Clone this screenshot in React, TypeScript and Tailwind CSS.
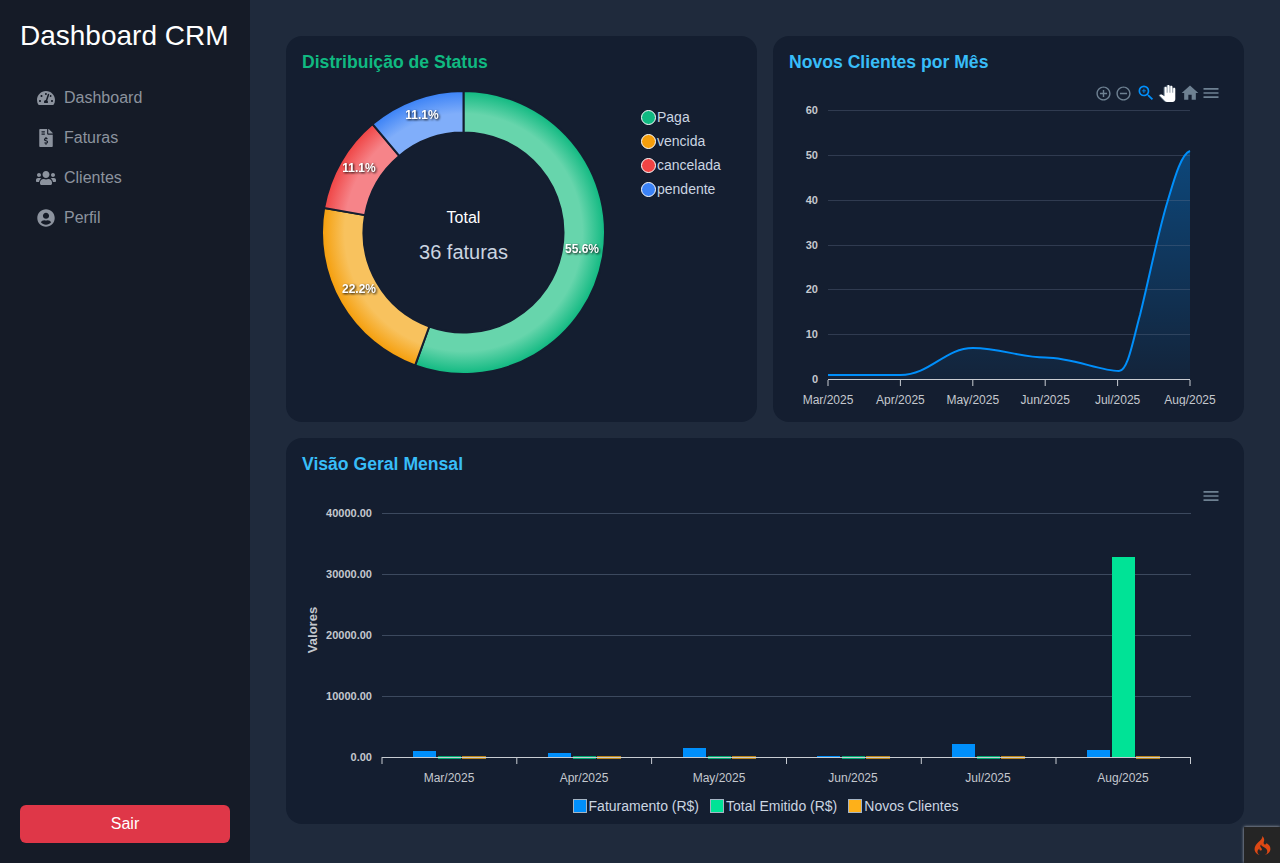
import { FaFileInvoiceDollar, FaTachometerAlt, FaUserCircle, FaUsers } from 'react-icons/fa';
import { MdAddCircleOutline, MdHome, MdMenu, MdPanTool, MdRemoveCircleOutline, MdZoomIn } from 'react-icons/md';
import { SiCodeigniter } from 'react-icons/si';

const NAV = [
  { label: 'Dashboard', icon: FaTachometerAlt },
  { label: 'Faturas', icon: FaFileInvoiceDollar },
  { label: 'Clientes', icon: FaUsers },
  { label: 'Perfil', icon: FaUserCircle },
];

// centro e raios do donut, em coordenadas da pagina
const CX = 463.5;
const CY = 232.5;
const R_OUT = 141.5;
const R_IN = 100;

const SLICES = [
  { id: 'paga', name: 'Paga', frac: 5 / 9, base: '#10b981', light: '#67d5ac', text: '55.6%', tx: 582, ty: 253 },
  { id: 'vencida', name: 'vencida', frac: 2 / 9, base: '#f59e0b', light: '#f8c25e', text: '22.2%', tx: 359, ty: 293 },
  { id: 'cancelada', name: 'cancelada', frac: 1 / 9, base: '#ef4444', light: '#f68489', text: '11.1%', tx: 359, ty: 172 },
  { id: 'pendente', name: 'pendente', frac: 1 / 9, base: '#3b82f6', light: '#80aefa', text: '11.1%', tx: 422, ty: 119 },
];

function polar(r: number, a: number) {
  return `${CX + r * Math.sin(a)} ${CY - r * Math.cos(a)}`;
}

function slicePath(start: number, end: number) {
  const a0 = start * Math.PI * 2;
  const a1 = end * Math.PI * 2;
  const large = end - start > 0.5 ? 1 : 0;
  return `M${polar(R_OUT, a0)} A${R_OUT} ${R_OUT} 0 ${large} 1 ${polar(R_OUT, a1)} L${polar(R_IN, a1)} A${R_IN} ${R_IN} 0 ${large} 0 ${polar(R_IN, a0)} Z`;
}

function DonutChart() {
  let acc = 0;
  return (
    <svg viewBox="302 72 339 334" className="h-[334px] w-[339px] shrink-0">
      <defs>
        {SLICES.map((s) => (
          <radialGradient key={s.id} id={`g-${s.id}`} gradientUnits="userSpaceOnUse" cx={CX} cy={CY} r={R_OUT}>
            <stop offset="0.7" stopColor={s.light} />
            <stop offset="0.84" stopColor={s.light} />
            <stop offset="1" stopColor={s.base} />
          </radialGradient>
        ))}
      </defs>
      {SLICES.map((s) => {
        const start = acc;
        acc += s.frac;
        return <path key={s.id} d={slicePath(start, acc)} fill={`url(#g-${s.id})`} stroke="#141e30" strokeWidth="2" />;
      })}
      {SLICES.map((s) => (
        <text
          key={s.id}
          x={s.tx}
          y={s.ty}
          textAnchor="middle"
          fill="#fff"
          className="text-[12px] font-bold drop-shadow-[1px_1px_1px_rgba(0,0,0,0.9)]"
        >
          {s.text}
        </text>
      ))}
      <text x={CX} y={223} textAnchor="middle" fill="#fff" className="text-[16px]">
        Total
      </text>
      <text x={CX} y={259} textAnchor="middle" fill="#cbd5e1" className="text-[20px]">
        36 faturas
      </text>
    </svg>
  );
}

const LINE_X = [828, 900.4, 972.8, 1045.2, 1117.6, 1190];
const LINE_LABELS = ['Mar/2025', 'Apr/2025', 'May/2025', 'Jun/2025', 'Jul/2025', 'Aug/2025'];
const LINE_PATH =
  'M828 375 C860 375 880 375 900.4 375 C930 375 945 348 972.8 348 C1000 348 1020 357.5 1045.2 357.5 C1072 357.5 1100 371 1119 371 C1128 371 1133 340 1140 315 C1150 275 1158 232 1168 200 C1174 180 1181 154 1190 151';

function LineChart() {
  const ticks = [60, 50, 40, 30, 20, 10];
  return (
    <svg viewBox="789 72 439 334" className="h-[334px] w-full">
      <defs>
        <linearGradient id="area" x1="0" y1="0" x2="0" y2="1">
          <stop offset="0" stopColor="#0090ff" stopOpacity="0.36" />
          <stop offset="1" stopColor="#0090ff" stopOpacity="0.05" />
        </linearGradient>
      </defs>
      <path d={`${LINE_PATH} L1190 380 L828 380 Z`} fill="url(#area)" />
      {ticks.map((t) => {
        const y = Math.floor(379.5 - t * 4.48) + 0.5;
        return (
          <g key={t}>
            <line x1="828" x2="1190" y1={y} y2={y} stroke="#64748b" strokeOpacity="0.35" />
            <text x="818" y={y + 3.5} textAnchor="end" fill="#c4c8ce" className="text-[11px] font-bold">
              {t}
            </text>
          </g>
        );
      })}
      <text x="818" y="383" textAnchor="end" fill="#c4c8ce" className="text-[11px] font-bold">
        0
      </text>
      <path d={LINE_PATH} fill="none" stroke="#008ffb" strokeWidth="2" />
      <line x1="828" x2="1190" y1="379.5" y2="379.5" stroke="#c8ccd2" />
      {LINE_X.map((x, i) => (
        <g key={x}>
          <line x1={x} x2={x} y1="380" y2="386" stroke="#c8ccd2" />
          <text x={x} y="404" textAnchor="middle" fill="#c4c8ce" className="text-[12px]">
            {LINE_LABELS[i]}
          </text>
        </g>
      ))}
    </svg>
  );
}

const BAR_GROUPS = [
  { label: 'Mar/2025', x: 413, blueTop: 751 },
  { label: 'Apr/2025', x: 548, blueTop: 753 },
  { label: 'May/2025', x: 683, blueTop: 748 },
  { label: 'Jun/2025', x: 817, blueTop: 756 },
  { label: 'Jul/2025', x: 952, blueTop: 744 },
  { label: 'Aug/2025', x: 1087, blueTop: 750 },
];

function BarChart() {
  const ticks = [
    { label: '40000.00', y: 513 },
    { label: '30000.00', y: 574 },
    { label: '20000.00', y: 635 },
    { label: '10000.00', y: 696 },
    { label: '0.00', y: 757 },
  ];
  return (
    <svg viewBox="302 474 926 322" className="h-[322px] w-full">
      {ticks.map((t) => (
        <g key={t.label}>
          {t.y !== 757 && <line x1="382" x2="1191" y1={t.y + 0.5} y2={t.y + 0.5} stroke="#64748b" strokeOpacity="0.5" />}
          <text x="372" y={t.y + 4} textAnchor="end" fill="#c4c8ce" className="text-[11px] font-bold">
            {t.label}
          </text>
        </g>
      ))}
      <text
        x="0"
        y="0"
        transform="translate(317 630) rotate(-90)"
        textAnchor="middle"
        fill="#c4c8ce"
        className="text-[13px] font-bold"
      >
        Valores
      </text>
      {BAR_GROUPS.map((g, i) => (
        <g key={g.label}>
          <rect x={g.x} y={g.blueTop} width="23" height={757 - g.blueTop} fill="#008ffb" />
          <rect
            x={g.x + 25}
            y={i === 5 ? 557 : 756}
            width="23"
            height={i === 5 ? 200 : 3}
            fill={i === 5 ? '#00e396' : '#00a870'}
          />
          <rect x={g.x + 49} y="756" width="24" height="3" fill="#b98418" />
          <text x={g.x + 36} y="782" textAnchor="middle" fill="#c4c8ce" className="text-[12px]">
            {g.label}
          </text>
        </g>
      ))}
      <line x1="382" x2="1191" y1="757.5" y2="757.5" stroke="#c8ccd2" />
      {[382, 516.8, 651.6, 786.5, 921.3, 1056, 1190.5].map((x) => (
        <line key={x} x1={x} x2={x} y1="757" y2="764" stroke="#c8ccd2" />
      ))}
    </svg>
  );
}

export default function App() {
  return (
    <div className="flex min-h-screen bg-[#1f2a3c] font-['Liberation_Sans',Arial,sans-serif]">
      {/* Sidebar */}
      <aside className="flex h-[863px] w-[250px] shrink-0 flex-col justify-between bg-[#151b27] p-5">
        <div>
          <h1 className="text-[28px] leading-8 whitespace-nowrap text-white">Dashboard CRM</h1>
          <nav className="mt-[26px] flex flex-col">
            {NAV.map((item) => (
              <a key={item.label} href="#" className="flex h-10 items-center gap-2 pl-4 text-base text-[#8c939e]">
                <span className="flex w-5 justify-center">
                  <item.icon className={item.label === 'Clientes' ? 'text-[20px]' : 'text-[18px]'} />
                </span>
                {item.label}
              </a>
            ))}
          </nav>
        </div>
        <button className="h-[38px] w-full rounded-md bg-[#df3748] text-base text-white">Sair</button>
      </aside>

      {/* Conteudo */}
      <main className="box-content grid h-fit w-[958px] grid-cols-2 gap-4 pt-9 pl-9">
        <section className="rounded-2xl bg-[#141e30] p-4">
          <h2 className="text-[17.6px] leading-5 font-bold text-[#10b981]">Distribuição de Status</h2>
          <div className="flex">
            <DonutChart />
            <ul className="mt-[35px] flex flex-col gap-1">
              {SLICES.map((s) => (
                <li key={s.id} className="flex h-5 items-center gap-px text-sm text-[#cbd5e1]">
                  <span className="size-[15px] rounded-full border border-white" style={{ backgroundColor: s.base }} />
                  {s.name}
                </li>
              ))}
            </ul>
          </div>
        </section>

        <section className="relative rounded-2xl bg-[#141e30] p-4">
          <h2 className="text-[17.6px] leading-5 font-bold text-[#38bdf8]">Novos Clientes por Mês</h2>
          <div className="absolute top-[47px] right-[23px] flex items-center text-[#6e8192]">
            <MdAddCircleOutline className="size-[17px]" />
            <MdRemoveCircleOutline className="ml-[3px] size-[17px]" />
            <MdZoomIn className="ml-[4.5px] size-[20px] text-[#008ffb]" />
            <MdPanTool className="ml-[3px] size-[17px] text-white drop-shadow-[-1px_0_0_#6e8192]" />
            <MdHome className="ml-[4px] size-[20px]" />
            <MdMenu className="ml-px size-[20px]" />
          </div>
          <LineChart />
        </section>

        <section className="relative col-span-2 rounded-2xl bg-[#141e30] px-4 pt-4 pb-2">
          <h2 className="text-[17.6px] leading-5 font-bold text-[#38bdf8]">Visão Geral Mensal</h2>
          <MdMenu className="absolute top-[48px] right-[23px] size-[20px] text-[#6e8192]" />
          <BarChart />
          <div className="flex h-5 items-center justify-center gap-[11px] pl-px text-sm text-[#cbd5e1]">
            <span className="flex items-center gap-[2px]">
              <span className="size-[14px] border border-[#a5b4c4] bg-[#008ffb]" />
              Faturamento (R$)
            </span>
            <span className="flex items-center gap-[2px]">
              <span className="size-[14px] border border-[#a5b4c4] bg-[#00e396]" />
              Total Emitido (R$)
            </span>
            <span className="flex items-center gap-[2px]">
              <span className="size-[14px] border border-[#a5b4c4] bg-[#feb019]" />
              Novos Clientes
            </span>
          </div>
        </section>
      </main>

      {/* Botao flutuante da barra de debug */}
      <div className="fixed right-0 bottom-0 flex size-9 items-center justify-center bg-[#252525] shadow-[0_0_3px_rgba(255,255,255,0.7)]">
        <SiCodeigniter className="size-[19px] text-[#dd4814]" />
      </div>
    </div>
  );
}
